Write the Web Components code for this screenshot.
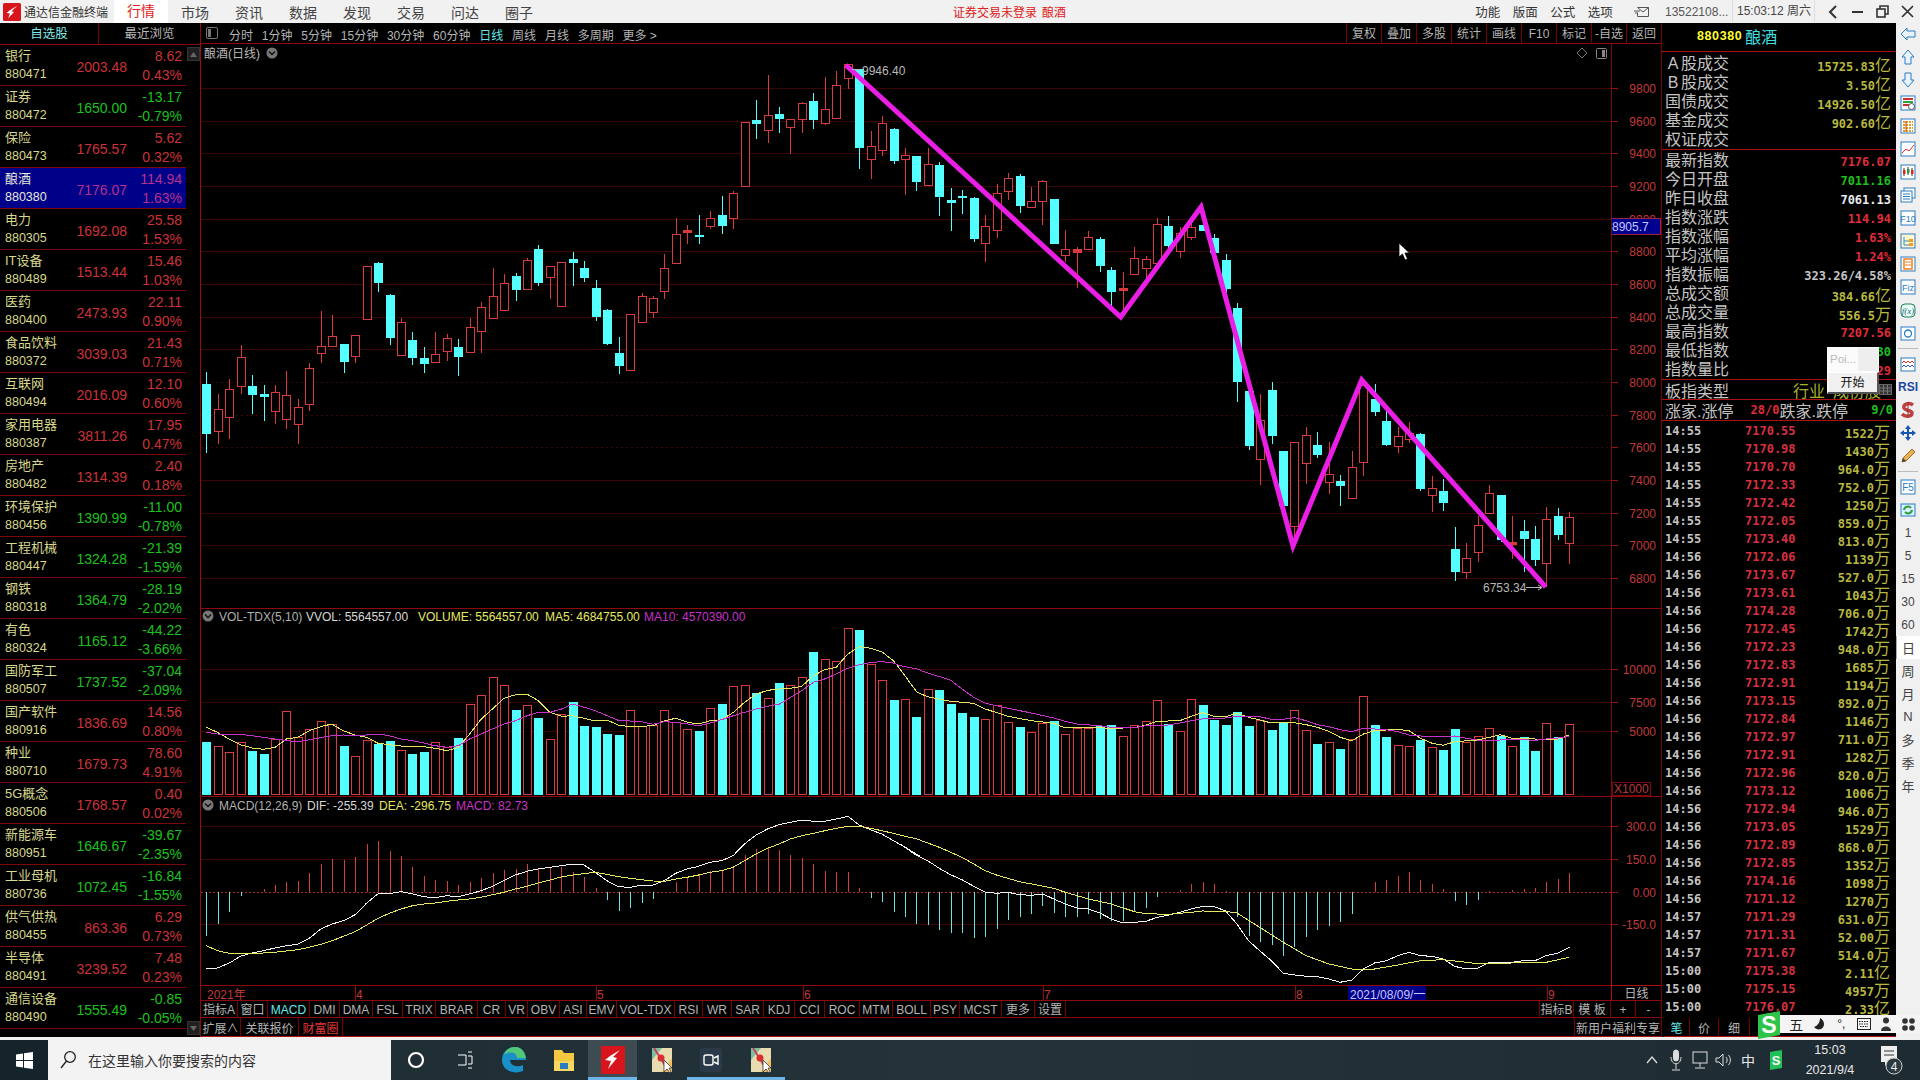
<!DOCTYPE html>
<html lang="zh">
<head>
<meta charset="utf-8">
<title>通达信金融终端</title>
<style>
  html, body { margin: 0; padding: 0; background: #000; }
  body {
    width: 1920px; height: 1080px; overflow: hidden; position: relative;
    font-family: "Liberation Sans", "Noto Sans CJK SC", sans-serif;
    font-size: 12px; color: #c8c8c8;
  }
  .desk { display: flex; height: 1014px; background: #000; }
  .centre { width: 1461px; display: flex; flex-direction: column; }
</style>
</head>
<body>
<tdx-titlebar></tdx-titlebar>
<div class="desk">
  <tdx-list id="list"></tdx-list>
  <div class="centre">
    <tdx-toolbar></tdx-toolbar>
    <tdx-kline></tdx-kline>
    <tdx-volume></tdx-volume>
    <tdx-macd></tdx-macd>
    <tdx-dates></tdx-dates>
    <tdx-indicators></tdx-indicators>
    <tdx-bottom></tdx-bottom>
  </div>
  <tdx-quote id="quote"></tdx-quote>
  <tdx-iconbar></tdx-iconbar>
</div>
<tdx-taskbar></tdx-taskbar>
<tdx-popup></tdx-popup>
<tdx-ime></tdx-ime>
<tdx-cursor></tdx-cursor>

<script>
const RED = '#d83a3e', CYAN = '#54ffff', LINE = '#8c0a0a', GRID = '#3a0606';
const X = i => Math.round(206.3 + 11.454 * i) + 0.5;

// up, wick top, body top, body bottom, wick bottom (screen y)
const CANDLES = [
  [0,373,385,435,454],[1,395,410,432,445],[1,380,390,418,440],[1,346,358,387,395],[0,376,387,396,415],
  [0,386,395,397,422],[1,386,393,412,425],[1,372,396,420,430],[1,400,408,425,445],[1,364,369,405,412],
  [1,312,347,354,364],[1,316,337,347,347],[0,345,345,363,374],[1,336,336,357,364],[1,267,267,320,320],
  [0,263,264,284,293],[0,295,296,339,346],[1,319,323,356,356],[0,333,341,359,366],[0,348,359,365,374],
  [1,333,355,363,363],[1,335,339,352,362],[0,340,348,358,377],[1,319,328,353,353],[1,303,308,332,354],
  [1,269,297,319,319],[1,275,284,311,311],[0,274,277,291,302],[1,259,261,290,290],[0,246,250,284,287],
  [1,267,267,278,300],[1,263,263,307,307],[0,253,260,263,287],[0,262,269,279,283],[0,281,289,318,322],
  [0,310,311,345,346],[0,338,354,367,375],[1,315,315,371,371],[1,294,297,323,323],[1,297,299,313,319],
  [1,255,269,292,300],[1,219,235,264,264],[1,226,231,233,245],[0,216,236,237,245],[1,212,219,227,230],
  [0,197,216,227,235],[1,192,194,219,230],[1,123,123,187,187],[0,101,121,125,140],[1,76,116,131,144],
  [0,108,115,120,134],[1,120,120,128,155],[1,103,104,120,134],[0,94,102,121,130],[1,78,110,124,126],
  [1,72,86,119,119],[1,65,65,79,90],[0,70,70,149,170],[1,132,147,160,180],[1,117,124,151,157],
  [0,129,130,162,165],[1,149,156,160,196],[0,157,157,183,192],[1,149,165,186,186],[0,163,166,198,217],
  [0,189,201,203,232],[0,191,197,198,215],[0,198,199,240,243],[1,216,227,244,263],[1,185,194,231,239],
  [1,174,179,192,201],[0,175,177,207,214],[1,188,202,208,208],[1,181,182,202,226],[0,200,200,245,245],
  [1,231,250,256,263],[1,248,250,253,289],[1,232,238,250,251],[0,238,240,267,273],[0,268,271,293,307],
  [1,273,289,291,317],[1,248,259,275,275],[1,257,260,269,287],[1,219,225,264,264],[0,217,227,247,250],
  [1,228,234,252,259],[1,224,228,238,241],[0,226,226,232,232],[0,235,239,254,258],[0,255,261,290,295],
  [0,304,309,383,403],[0,385,392,447,451],[1,395,421,460,486],[0,383,391,437,445],[0,452,452,507,507],
  [1,443,443,527,547],[1,428,436,464,485],[0,433,446,456,459],[1,443,475,483,495],[0,476,482,487,507],
  [1,452,468,499,499],[1,380,386,463,477],[0,385,400,413,417],[0,407,422,446,447],[1,428,437,447,454],
  [1,423,434,440,444],[0,434,435,490,492],[1,477,489,496,513],[0,480,492,504,512],[0,528,550,573,582],
  [1,544,559,573,580],[1,517,526,553,563],[1,486,494,514,514],[0,496,496,541,543],[1,517,543,545,560],
  [0,521,532,540,573],[0,527,540,561,567],[1,508,520,564,588],[0,509,517,536,541],[1,513,518,544,565]
];

// top of each volume bar
const VOLUME = [
  743,747,753,743,752,755,740,712,738,730,722,725,747,757,741,745,742,751,755,753,
  743,748,739,705,696,678,686,711,706,719,740,715,703,727,728,735,736,711,727,726,
  711,723,730,732,709,705,687,686,694,699,684,686,678,653,660,662,629,631,665,681,
  701,700,718,690,691,705,714,718,720,706,723,728,733,724,722,735,729,729,727,726,
  737,726,722,701,725,732,700,706,721,726,713,727,721,731,723,711,731,745,743,750,
  740,697,726,738,746,747,741,748,751,730,743,737,729,737,747,738,752,724,738,725
];

// end of each MACD bar, the zero line is 893
const HIST = [
  937,925,913,897,893,890,886,883,882,874,865,860,861,858,845,842,852,857,868,877,
  881,882,886,883,879,874,871,870,865,870,869,868,873,878,889,901,912,909,904,900,
  893,883,878,876,872,872,868,856,850,849,851,856,859,865,872,873,873,889,899,903,
  913,918,925,926,931,934,934,939,938,930,921,918,915,907,914,918,918,915,920,922,
  922,913,909,898,893,891,885,883,885,892,918,937,943,946,957,948,938,931,927,923,
  915,893,883,881,877,873,881,885,890,902,906,901,892,893,891,890,889,883,880,874
];

const left = (pts) => pts.map(([x, y]) => [200 + x / 2.24, 600 + y / 3]);
const right = (pts) => pts.map(([x, y]) => [900 + x / 2.063, 610 + y / 3]);
const macd = (pts) => pts.map(([x, y]) => [200 + x / 2.178, 800 + y / 3]);
const poly = (pts, color) => `<polyline fill="none" stroke="${color}" stroke-width="1" shape-rendering="crispEdges" points="${pts.map(p => p[0].toFixed(1) + ',' + p[1].toFixed(1)).join(' ')}"/>`;

const MA5 = left([[14,385],[39,400],[65,420],[90,437],[117,447],[142,451],[168,445],[194,420],[219,415],[245,395],[270,383],[295,375],[321,395],[347,408],[373,415],[399,433],[424,437],[450,441],[476,442],[501,443],[527,448],[553,455],[579,445],[604,405],[630,360],[655,330],[681,298],[707,287],[733,286],[758,305],[784,340],[810,352],[834,350],[861,358],[885,366],[912,363],[937,378],[963,383],[989,382],[1015,380],[1040,365],[1066,358],[1092,370],[1117,375],[1143,365],[1168,362],[1195,340],[1220,310],[1246,285],[1272,274],[1298,270],[1323,268],[1348,262],[1374,230],[1399,212],[1425,205],[1451,165],[1477,143],[1503,148],[1529,160],[1553,185],[1568,210]])
  .concat(right([[35,250],[57,263],[104,277],[152,283],[176,300],[223,322],[271,335],[317,343],[341,357],[389,355],[436,358],[484,356],[507,348],[531,337],[577,335],[601,322],[624,311],[648,322],[671,323],[695,313],[719,325],[742,333],[766,342],[814,341],[838,347],[861,355],[885,367],[908,385],[932,395],[956,375],[979,365],[1027,361],[1050,365],[1074,388],[1098,403],[1121,409],[1144,398],[1191,393],[1216,385],[1238,377],[1263,388],[1285,388],[1333,392],[1358,390],[1381,378]]));
const MA10 = left([[14,400],[39,405],[65,406],[90,406],[117,410],[142,415],[168,420],[194,425],[219,428],[245,422],[270,416],[295,410],[321,408],[347,410],[373,408],[399,405],[424,410],[450,420],[476,425],[501,432],[527,440],[553,445],[579,440],[604,420],[630,405],[655,390],[681,375],[707,365],[733,350],[758,340],[784,340],[810,330],[834,315],[861,325],[885,335],[912,350],[937,364],[963,366],[989,368],[1015,376],[1040,368],[1066,370],[1092,375],[1117,380],[1143,372],[1168,362],[1195,350],[1220,340],[1246,330],[1272,322],[1298,315],[1323,295],[1348,275],[1374,250],[1399,240],[1425,225],[1451,208],[1477,197],[1503,190],[1529,188],[1553,192],[1568,200]])
  .concat(right([[35,180],[57,192],[104,213],[128,240],[152,265],[176,283],[199,290],[223,298],[271,312],[317,327],[341,337],[365,345],[412,350],[436,355],[484,356],[507,350],[554,348],[577,342],[601,335],[624,330],[671,327],[695,322],[742,323],[766,331],[791,331],[814,326],[838,335],[861,347],[885,353],[908,362],[932,368],[956,358],[1003,362],[1027,368],[1050,378],[1098,384],[1144,381],[1168,388],[1191,393],[1238,393],[1285,392],[1310,394],[1333,390],[1358,387],[1381,382]]));
const DIF = macd([[14,510],[38,507],[64,492],[88,472],[113,462],[138,455],[163,447],[188,440],[212,436],[238,418],[263,390],[288,375],[312,365],[338,347],[363,312],[388,284],[412,284],[438,278],[463,285],[487,293],[512,296],[537,290],[562,293],[587,285],[612,275],[637,262],[662,245],[687,228],[712,217],[737,210],[762,205],[787,200],[812,195],[836,198],[861,220],[886,245],[911,263],[937,265],[961,259],[987,258],[1011,245],[1036,223],[1061,210],[1086,202],[1111,190],[1136,185],[1161,170],[1186,135],[1211,108],[1236,90],[1261,77],[1286,70],[1311,63],[1336,67],[1361,67],[1386,60],[1411,52],[1436,78],[1460,92],[1485,105],[1510,125],[1536,145],[1568,172]])
  .concat(right([[0,705],[35,740],[57,755],[81,778],[104,797],[128,812],[152,832],[176,849],[199,853],[223,850],[247,857],[271,859],[295,855],[317,870],[341,885],[365,897],[389,900],[412,912],[436,930],[459,942],[484,940],[507,937],[531,925],[554,918],[577,910],[601,900],[624,892],[648,893],[671,905],[695,945],[719,995],[742,1025],[766,1055],[791,1093],[814,1098],[838,1102],[861,1103],[885,1110],[908,1120],[932,1113],[956,1080],[979,1062],[1003,1055],[1027,1040],[1050,1030],[1074,1040],[1098,1042],[1121,1050],[1144,1072],[1168,1080],[1191,1078],[1216,1060],[1263,1060],[1285,1055],[1310,1055],[1333,1040],[1358,1032],[1381,1015]]));
const DEA = macd([[14,440],[38,455],[64,463],[88,465],[113,464],[138,462],[163,460],[188,456],[212,452],[238,445],[263,436],[288,425],[312,412],[338,398],[363,378],[388,358],[412,343],[438,330],[463,320],[487,315],[512,312],[537,307],[562,303],[587,300],[612,295],[637,287],[662,280],[687,270],[712,262],[737,252],[762,243],[787,234],[812,228],[836,224],[861,220],[886,226],[911,233],[937,238],[961,242],[987,246],[1011,247],[1036,240],[1061,235],[1086,228],[1111,220],[1136,215],[1161,205],[1186,185],[1211,165],[1236,148],[1261,135],[1286,120],[1311,110],[1336,103],[1361,95],[1386,88],[1411,82],[1436,82],[1460,88],[1485,95],[1510,103],[1536,112],[1568,122]])
  .concat(right([[35,690],[81,715],[128,745],[176,785],[199,798],[247,818],[317,838],[341,850],[389,870],[436,885],[484,908],[507,914],[554,916],[601,910],[624,906],[671,907],[695,912],[742,955],[791,1000],[838,1040],[885,1065],[932,1080],[979,1080],[1027,1068],[1074,1055],[1121,1052],[1168,1060],[1191,1064],[1263,1062],[1333,1060],[1381,1045]]));

const ROWS = [
  ['银行','880471','2003.48','8.62','0.43%'],['证券','880472','1650.00','-13.17','-0.79%'],['保险','880473','1765.57','5.62','0.32%'],
  ['酿酒','880380','7176.07','114.94','1.63%'],['电力','880305','1692.08','25.58','1.53%'],['IT设备','880489','1513.44','15.46','1.03%'],
  ['医药','880400','2473.93','22.11','0.90%'],['食品饮料','880372','3039.03','21.43','0.71%'],['互联网','880494','2016.09','12.10','0.60%'],
  ['家用电器','880387','3811.26','17.95','0.47%'],['房地产','880482','1314.39','2.40','0.18%'],['环境保护','880456','1390.99','-11.00','-0.78%'],
  ['工程机械','880447','1324.28','-21.39','-1.59%'],['钢铁','880318','1364.79','-28.19','-2.02%'],['有色','880324','1165.12','-44.22','-3.66%'],
  ['国防军工','880507','1737.52','-37.04','-2.09%'],['国产软件','880916','1836.69','14.56','0.80%'],['种业','880710','1679.73','78.60','4.91%'],
  ['5G概念','880506','1768.57','0.40','0.02%'],['新能源车','880951','1646.67','-39.67','-2.35%'],['工业母机','880736','1072.45','-16.84','-1.55%'],
  ['供气供热','880455','863.36','6.29','0.73%'],['半导体','880491','3239.52','7.48','0.23%'],['通信设备','880490','1555.49','-0.85','-0.05%']
];

const TICKS = [
  ['14:55','7170.55','1522','万'],['14:55','7170.98','1430','万'],['14:55','7170.70','964.0','万'],['14:55','7172.33','752.0','万'],
  ['14:55','7172.42','1250','万'],['14:55','7172.05','859.0','万'],['14:55','7173.40','813.0','万'],['14:56','7172.06','1139','万'],
  ['14:56','7173.67','527.0','万'],['14:56','7173.61','1043','万'],['14:56','7174.28','706.0','万'],['14:56','7172.45','1742','万'],
  ['14:56','7172.23','948.0','万'],['14:56','7172.83','1685','万'],['14:56','7172.91','1194','万'],['14:56','7173.15','892.0','万'],
  ['14:56','7172.84','1146','万'],['14:56','7172.97','711.0','万'],['14:56','7172.91','1282','万'],['14:56','7172.96','820.0','万'],
  ['14:56','7173.12','1006','万'],['14:56','7172.94','946.0','万'],['14:56','7173.05','1529','万'],['14:56','7172.89','868.0','万'],
  ['14:56','7172.85','1352','万'],['14:56','7174.16','1098','万'],['14:56','7171.12','1270','万'],['14:57','7171.29','631.0','万'],
  ['14:57','7171.31','52.00','万'],['14:57','7171.67','514.0','万'],['15:00','7175.38','2.11','亿'],['15:00','7175.15','4957','万'],
  ['15:00','7176.07','2.33','亿']
];

const LOGO = `<svg width="18" height="18" viewBox="0 0 18 18"><rect width="18" height="18" rx="1.5" fill="#d8141c"/><path d="M14.5 2.5 L6.5 7.5 L3.5 10 L7 10.5 L5 15.5 L11 9 L8.5 8.2 Z" fill="#fff"/></svg>`;

class BaseEl extends HTMLElement {
  constructor() {
    super();
    this.attachShadow({ mode: 'open' });
  }
  connectedCallback() {
    this.render();
  }
}

class TdxTitlebar extends BaseEl {
  render() {
    const menu = ['市场','资讯','数据','发现','交易','问达','圈子'].map(m => `<span class="m">${m}</span>`).join('');
    this.shadowRoot.innerHTML = `<style>
      :host { display: flex; height: 23px; background: #f1f1f1; color: #444; align-items: center; font-size: 14px; }
      .logo { width: 24px; padding-left: 3px; box-sizing: border-box; display: flex; }
      .t { font-size: 12px; width: 89px; color: #333; white-space: nowrap; }
      .on { width: 54px; height: 23px; line-height: 23px; text-align: center; color: #e02020; background: #fff; margin-left: 1px; box-sizing: border-box; }
      .m { width: 54px; text-align: center; }
      .warn { position: absolute; left: 953px; top: 3px; font-size: 12px; color: #e02020; }
      .warn b { font-weight: normal; margin-left: 5px; }
      .sp { flex: 1; }
      .f { font-size: 12.5px; width: 37.5px; text-align: center; color: #333; }
      .acct { font-size: 12px; width: 67px; color: #555; margin-left: 10px; white-space: nowrap; }
      .time { font-size: 12px; width: 83px; padding-left: 4px; color: #444; border-left: 1px solid #ddd; border-right: 1px solid #ddd; box-sizing: border-box; line-height: 23px; height: 23px; white-space: nowrap; }
      svg { display: block; }
      .ico { width: 25px; display: flex; justify-content: center; }
    </style>
    <div class="logo">${LOGO}</div>
    <span class="t">通达信金融终端</span>
    <span class="on">行情</span>${menu}
    <span class="warn">证券交易未登录<b>酿酒</b></span>
    <span class="sp"></span>
    <span class="f">功能</span><span class="f">版面</span><span class="f">公式</span><span class="f">选项</span>
    <span class="ico" style="margin-left:10px;width:26px"><svg width="16" height="12" viewBox="0 0 16 12" fill="none" stroke="#555"><path d="M3.5 1.5 H14.5 V10.5 H3.5 V7 M3.5 1.5 L9 6 L14.5 1.5"/><path d="M0 5 H6 M1 7 H4" /></svg></span>
    <span class="acct">13522108...</span>
    <span class="time">15:03:12 周六</span>
    <span class="ico" style="margin-left:5px"><svg width="10" height="14" viewBox="0 0 10 14" fill="none" stroke="#333" stroke-width="2"><path d="M8 1 L2 7 L8 13"/></svg></span>
    <span class="ico"><svg width="11" height="3"><rect width="11" height="2" y="1" fill="#333"/></svg></span>
    <span class="ico"><svg width="13" height="13" viewBox="0 0 13 13" fill="none" stroke="#333" stroke-width="1.6"><rect x="1" y="4" width="8" height="8"/><path d="M4 4 V1 H12 V9 H9"/></svg></span>
    <span class="ico"><svg width="13" height="13" viewBox="0 0 13 13" stroke="#333" stroke-width="1.7"><path d="M1 1 L12 12 M12 1 L1 12"/></svg></span>`;
  }
}

class TdxListRow extends BaseEl {
  render() {
    const a = n => this.getAttribute(n);
    const down = a('change').startsWith('-');
    this.shadowRoot.innerHTML = `<style>
      :host { display: flex; height: 41px; box-sizing: border-box; border-bottom: 1px solid #7a0a0a; align-items: center; }
      :host([selected]) { background: #000088; }
      .n { width: 70px; padding-left: 5px; box-sizing: border-box; color: #d8d88c; line-height: 17px; }
      :host([selected]) .n { color: #e8e8d8; }
      .n div:first-child { font-size: 13px; height: 19px; white-space: nowrap; }
      .n div:last-child { font-size: 12.5px; }
      .p { width: 57px; text-align: right; font-size: 14px; padding-top: 4px; }
      .c { width: 55px; text-align: right; font-size: 14px; line-height: 19px; padding-top: 2px; }
      .v { color: ${down ? '#1cc01c' : '#cc3238'}; }
      :host([selected]) .v { color: #b8308c; }
    </style>
    <div class="n"><div>${a('name')}</div><div>${a('code')}</div></div>
    <div class="p v">${a('price')}</div>
    <div class="c v"><div>${a('change')}</div><div>${a('pct')}</div></div>`;
  }
}

class TdxList extends BaseEl {
  render() {
    this.shadowRoot.innerHTML = `<style>
      :host { display: flex; flex-direction: column; width: 200px; flex: none; position: relative; }
      .tabs { display: flex; height: 21px; border-bottom: 1px solid ${LINE}; line-height: 22px; text-align: center; font-size: 12.5px; }
      .tabs div:first-child { width: 99px; color: #7fe8e8; border-right: 1px solid #700; box-sizing: border-box; }
      .tabs div:last-child { width: 101px; color: #b8b8b8; }
      .rows { width: 186px; }
      .btn { position: absolute; left: 187px; width: 13px; height: 14px; background: #202020; border: 1px solid #333; box-sizing: border-box; display: flex; align-items: center; justify-content: center; }
      .up { top: 24px; }
      .dn { bottom: 2px; }
    </style>
    <div class="tabs"><div>自选股</div><div>最近浏览</div></div>
    <div class="rows"><slot></slot></div>
    <div class="btn up"><svg width="7" height="5"><path d="M0 5 L3.5 0 L7 5Z" fill="#666"/></svg></div>
    <div class="btn dn"><svg width="7" height="5"><path d="M0 0 L3.5 5 L7 0Z" fill="#666"/></svg></div>`;
  }
}

class TdxToolbar extends BaseEl {
  render() {
    const periods = ['分时','1分钟','5分钟','15分钟','30分钟','60分钟','日线','周线','月线','多周期','更多 &gt;']
      .map(p => `<span class="${p === '日线' ? 'on' : ''}">${p}</span>`).join('');
    const tools = ['复权','叠加','多股','统计','画线','F10','标记','-自选','返回'].map(t => `<b>${t}</b>`).join('');
    this.shadowRoot.innerHTML = `<style>
      :host { display: flex; height: 21px; flex: none; box-sizing: border-box; border-bottom: 1px solid ${LINE}; border-left: 1px solid ${LINE}; align-items: center; color: #b4b4b4; font-size: 12px; white-space: nowrap; }
      .i { width: 28px; padding-left: 5px; box-sizing: border-box; display: flex; border-right: 1px solid transparent; }
      .p { display: flex; gap: 8.8px; padding-top: 2px; }
      .on { color: #66e8e8; }
      .t { margin-left: auto; display: flex; height: 20px; }
      b { font-weight: normal; width: 35px; text-align: center; line-height: 22px; border-left: 1px solid #700; box-sizing: border-box; }
    </style>
    <span class="i"><svg width="12" height="12" viewBox="0 0 12 12"><rect x=".5" y=".5" width="11" height="11" rx="1.5" fill="none" stroke="#777"/><rect x="2" y="2" width="3" height="8" fill="#777"/></svg></span>
    <div class="p">${periods}</div>
    <div class="t">${tools}</div>`;
  }
}

class TdxPane extends BaseEl {
  // shared frame: svg in screen coordinates
  frame(top, height, body) {
    this.shadowRoot.innerHTML = `<style>
      :host { display: block; height: ${height}px; flex: none; }
      svg { display: block; }
      text { font-family: "Liberation Sans", "Noto Sans CJK SC", sans-serif; font-size: 12px; }
    </style>
    <svg width="1461" height="${height}" viewBox="200 ${top} 1461 ${height}">
      <rect x="200" y="${top}" width="1461" height="${height}" fill="#000"/>
      ${body}
      <path d="M200.5 ${top} V${top + height}" stroke="#9a0c0c"/>
      <path d="M1611.5 ${top} V${top + height}" stroke="${this.axisColor || '#7a0a0a'}"/>
      <path d="M200 ${top + height - .5} H1661" stroke="${LINE}"/>
    </svg>`;
  }
  level(y, label, dash) {
    return `<path d="M201 ${y}.5 H1611" stroke="${GRID}" ${dash ? 'stroke-dasharray="2 3"' : ''}/>
      <path d="M1611 ${y}.5 H1618" stroke="#a01010"/>
      <text x="1656" y="${y + 5}" text-anchor="end" fill="#c03a3a">${label}</text>`;
  }
  dot(x, y) {
    return `<circle cx="${x}" cy="${y}" r="5.5" fill="#777"/><path d="M${x - 3} ${y - 1.5} L${x} ${y + 1.5} L${x + 3} ${y - 1.5}" stroke="#111" stroke-width="1.4" fill="none"/>`;
  }
}

class TdxKline extends TdxPane {
  render() {
    let body = '';
    for (let p = 9800; p >= 6800; p -= 200) {
      body += this.level(Math.round(383 + (8000 - p) * 0.1633), p, [8000, 7800, 7600].includes(p));
    }
    CANDLES.forEach((c, i) => {
      const x = X(i), col = c[0] ? RED : CYAN;
      body += `<path d="M${x} ${c[1]} V${c[2]} M${x} ${c[3]} V${c[4]}" stroke="${col}"/>`;
      if (c[3] - c[2] <= 3) body += `<rect x="${x - 4.5}" y="${c[2]}" width="9" height="${c[3] - c[2] + 1}" fill="${col}"/>`;
      else if (c[0]) body += `<rect x="${x - 4}" y="${c[2] + .5}" width="8" height="${c[3] - c[2]}" fill="#000" stroke="${col}"/>`;
      else body += `<rect x="${x - 4.5}" y="${c[2]}" width="9" height="${c[3] - c[2]}" fill="${col}"/>`;
    });
    body += `<polyline fill="none" stroke="#ea1ee4" stroke-width="5" stroke-linejoin="miter"
      points="845.7,66 1120.7,318 1201,208 1293,547 1361.7,381 1545.7,588"/>
      <text x="862" y="76" fill="#b8b8b8">9946.40</text>
      <path d="M852 70.5 H860" stroke="#b8b8b8"/>
      <text x="1483" y="593" fill="#b8b8b8">6753.34</text>
      <path d="M1526 588.5 H1542 M1538 586 L1542 588.5 L1538 591" stroke="#b8b8b8" fill="none"/>
      <text x="204" y="59" fill="#b8b8b8">酿酒(日线)</text>${this.dot(272, 54)}
      <path d="M1582 49 L1587 54 L1582 59 L1577 54 Z" fill="none" stroke="#777"/>
      <rect x="1596.5" y="49.5" width="10" height="10" rx="1" fill="none" stroke="#888"/><rect x="1602" y="51" width="3" height="7" fill="#888"/>
      <rect x="1611.5" y="219.5" width="49" height="16" fill="#000090" stroke="#a02040"/>
      <text x="1612" y="232" fill="#c8c8ff">8905.7</text>`;
    this.frame(45, 565, body);
  }
}

class TdxVolume extends TdxPane {
  render() {
    let body = this.level(670, 10000) + this.level(703, 7500) + this.level(732, 5000);
    VOLUME.forEach((top, i) => {
      const x = X(i);
      if (CANDLES[i][0]) body += `<rect x="${x - 4}" y="${top + .5}" width="8" height="${795 - top}" fill="#000" stroke="${RED}"/>`;
      else body += `<rect x="${x - 4.5}" y="${top}" width="9" height="${796 - top}" fill="${CYAN}"/>`;
    });
    body += poly(MA5, '#e8e860') + poly(MA10, '#c832c8');
    body += `${this.dot(208, 617)}
      <text x="219" y="622" fill="#b0b0b0">VOL-TDX(5,10)</text>
      <text x="306" y="622" fill="#d8d8d8">VVOL: 5564557.00</text>
      <text x="418" y="622" fill="#e8e860">VOLUME: 5564557.00</text>
      <text x="545" y="622" fill="#e8e860">MA5: 4684755.00</text>
      <text x="644" y="622" fill="#c832c8">MA10: 4570390.00</text>
      <rect x="1612.5" y="783.5" width="38" height="13" fill="none" stroke="#7a0a0a"/>
      <text x="1614" y="794" fill="#b83838">X1000</text>`;
    this.frame(610, 188, body);
  }
}

class TdxMacd extends TdxPane {
  render() {
    this.axisColor = '#b01010';
    let body = this.level(827, '300.0') + this.level(860, '150.0') + this.level(925, '-150.0');
    body += `<path d="M201 893.5 H1611" stroke="#a82a2a" stroke-dasharray="2 2"/><path d="M1611 893.5 H1618" stroke="#a01010"/><text x="1656" y="898" text-anchor="end" fill="#c03a3a">0.00</text>`;
    HIST.forEach((y, i) => {
      if (y === 893) return;
      const x = X(i);
      body += `<path d="M${x} 893 V${y}" stroke="${y < 893 ? '#d04040' : '#70e0e0'}"/>`;
    });
    body += poly(DIF, '#f4f4f4') + poly(DEA, '#e8e860');
    body += `${this.dot(208, 806)}
      <text x="219" y="811" fill="#b0b0b0">MACD(12,26,9)</text>
      <text x="307" y="811" fill="#d8d8d8">DIF: -255.39</text>
      <text x="379" y="811" fill="#e8e860">DEA: -296.75</text>
      <text x="456" y="811" fill="#c832c8">MACD: 82.73</text>`;
    this.frame(798, 189, body);
  }
}

class TdxDates extends BaseEl {
  render() {
    const marks = [[207,'2021年'],[356,'4'],[597,'5'],[804,'6'],[1044,'7'],[1296,'8'],[1548,'9']];
    const ticks = [355,596,803,1043,1295,1547].map(x => `<path d="M${x}.5 987 V1001" stroke="#8c0a0a"/>`).join('');
    const labels = marks.map(m => `<text x="${m[0]}" y="1000" fill="#c03a3a">${m[1]}</text>`).join('');
    this.shadowRoot.innerHTML = `<style>
      :host { display: flex; height: 15px; flex: none; box-sizing: border-box; border-bottom: 1px solid ${LINE}; border-left: 1px solid ${LINE}; }
      svg { display: block; flex: none; position: relative; z-index: 1; margin-bottom: -4px; }
      text { font-size: 12px; font-family: "Liberation Sans", "Noto Sans CJK SC", sans-serif; }
      .d { flex: 1; text-align: center; line-height: 16px; color: #b8b8b8; border-left: 1px solid #b01010; border-top: 1px solid #b01010; margin-top: -1px; font-size: 12px; background: #000; }
    </style>
    <svg width="1410" height="18" viewBox="201 987 1410 18">
      ${ticks}${labels}
      <rect x="1348" y="987" width="78" height="14" fill="#000088"/>
      <text x="1350" y="1000" fill="#c8c8ff">2021/08/09/一</text>
    </svg>
    <div class="d">日线</div>`;
  }
}

class TdxIndicators extends BaseEl {
  render() {
    const cells = [['指标A',37],['窗口',30],['MACD',42,'on'],['DMI',30],['DMA',33],['FSL',30],['TRIX',33],['BRAR',42],['CR',28],['VR',22],['OBV',32],['ASI',27],['EMV',30],['VOL-TDX',58],['RSI',28],['WR',29],['SAR',32],['KDJ',31],['CCI',30],['ROC',35],['MTM',33],['BOLL',38],['PSY',29],['MCST',42],['更多',33],['设置',31]];
    const html = cells.map(c => `<span class="${c[2] || ''}" style="width:${c[1]}px">${c[0]}</span>`).join('');
    this.shadowRoot.innerHTML = `<style>
      :host { display: flex; height: 17px; flex: none; box-sizing: border-box; border-bottom: 1px solid ${LINE}; border-left: 1px solid ${LINE}; color: #b4b4b4; font-size: 12px; line-height: 19px; white-space: nowrap; }
      span { display: block; flex: none; text-align: center; box-sizing: border-box; border-right: 1px solid #700; height: 16px; }
      .on { color: #66e8e8; }
      .sp { flex: 1; }
      .b { border-left: 1px solid #700; }
    </style>${html}<span class="sp" style="border:0"></span>
    <span class="b" style="width:35px">指标B</span><span style="width:37px">模 板</span><span style="width:25px">+</span><span style="width:25px;border:0">-</span>`;
  }
}

class TdxBottom extends BaseEl {
  render() {
    this.shadowRoot.innerHTML = `<style>
      :host { display: flex; height: 19px; flex: none; box-sizing: border-box; border-bottom: 1px solid #b01010; border-left: 1px solid ${LINE}; color: #b4b4b4; font-size: 12px; line-height: 22px; white-space: nowrap; }
      span { display: block; text-align: center; box-sizing: border-box; border-right: 1px solid #700; height: 18px; }
      .s { flex: 1; border: 0; }
      .red { color: #e03838; }
    </style>
    <span style="width:40px">扩展∧</span><span style="width:58px">关联报价</span><span class="red" style="width:44px">财富圈</span><span class="s"></span>
    <span style="width:87px;border-left:1px solid #700;border-right:0">新用户福利专享</span>`;
  }
}

class TdxStat extends BaseEl {
  render() {
    const a = n => this.getAttribute(n) || '';
    let label = a('label');
    if (/^[A-Z]/.test(label)) label = `<i>${label[0]}</i>${label.slice(1)}`;
    this.shadowRoot.innerHTML = `<style>
      :host { display: flex; height: var(--row, 19px); align-items: center; padding: 0 5px 0 3px; }
      .l { font-size: 16px; color: #c4c4c4; white-space: nowrap; line-height: 18px; }
      i { font-style: normal; display: inline-block; width: 16px; text-align: center; }
      .v { margin-left: auto; font: bold 12px "DejaVu Sans Mono", monospace; color: ${a('color') || '#b8b840'}; }
      .u { font-size: 16px; color: #b8b840; font-family: "Liberation Sans", "Noto Sans CJK SC", sans-serif; font-weight: normal; }
    </style>
    <span class="l">${label}</span><span class="v">${a('value')}<span class="u">${a('unit')}</span></span>`;
  }
}

class TdxTick extends BaseEl {
  render() {
    const a = n => this.getAttribute(n);
    this.shadowRoot.innerHTML = `<style>
      :host { display: flex; height: 18px; align-items: center; padding: 0 6px 0 3px; font: bold 12px "DejaVu Sans Mono", monospace; white-space: nowrap; }
      .t { width: 80px; color: #c4c4c4; }
      .p { width: 52px; color: #d83040; }
      .v { flex: 1; text-align: right; color: #b8b840; }
      .u { font: 16px "Liberation Sans", "Noto Sans CJK SC", sans-serif; }
    </style>
    <span class="t">${a('time')}</span><span class="p">${a('price')}</span><span class="v">${a('vol')}<span class="u">${a('unit')}</span></span>`;
  }
}

class TdxQuote extends BaseEl {
  render() {
    this.shadowRoot.innerHTML = `<style>
      :host { display: flex; flex-direction: column; width: 235px; flex: none; height: 1014px; box-sizing: border-box; border-left: 1px solid #700; }
      .h { height: 29px; flex: none; border-bottom: 1px solid #b01010; box-sizing: border-box; display: flex; align-items: center; padding: 0 0 2px 35px; gap: 3px; }
      .h b { font: bold 12.5px "Liberation Sans", sans-serif; color: #ffff30; letter-spacing: .6px; }
      .h em { font-style: normal; font-size: 16px; color: #40e0e0; }
      .g { border-bottom: 1px solid #b01010; flex: none; padding-top: 1px; box-sizing: content-box; }
      .a { height: 95px; padding-top: 2px; }
      .b { height: 227px; padding-top: 2px; --row: 18.95px; }
      .c { height: 19px; display: flex; align-items: center; padding: 0 6px 0 3px; font-size: 16px; color: #c4c4c4; position: relative; }
      .c .y { margin-left: 29px; color: #a8b030; letter-spacing: 0; }
      .c svg { position: absolute; right: 4px; top: 4px; }
      .d { height: 20px; padding-top: 0; margin-bottom: 1px; display: flex; align-items: center; padding-left: 3px; padding-right: 3px; font-size: 16px; color: #c4c4c4; white-space: nowrap; }
      .d b { font: bold 12px "DejaVu Sans Mono", monospace; }
      .t { flex: 1; }
      .tabs { height: 19px; flex: none; border-top: 0; display: flex; box-sizing: border-box; border-bottom: 1px solid #b01010; color: #b4b4b4; line-height: 22px; margin-left: 2px; }
      .tabs span { text-align: center; border-right: 1px solid #700; box-sizing: border-box; }
      .tabs .on { color: #66e8e8; }
    </style>
    <div class="h"><b>880380</b><em>酿酒</em></div>
    <div class="g a"><slot name="a"></slot></div>
    <div class="g b"><slot name="b"></slot></div>
    <div class="g c">板指类型<span class="y" style="margin-left:64px">行业</span><span class="y" style="margin-left:8px">成份股</span>
      <svg width="13" height="11" viewBox="0 0 13 11"><rect x=".5" y=".5" width="12" height="10" fill="#333" stroke="#666"/><path d="M1 4 H12 M1 7 H12 M4.5 1 V10 M8.5 1 V10" stroke="#777"/></svg></div>
    <div class="g d">涨家.涨停<b style="color:#e02c3a;margin-left:17px;width:29px">28/0</b>跌家.跌停<b style="color:#1cc01c;margin-left:auto">9/0</b></div>
    <div class="t"><slot name="t"></slot></div>
    <div class="tabs"><span class="on" style="width:26px">笔</span><span style="width:29px">价</span><span style="width:31px">细</span><span style="border:0;width:30px">买</span></div>`;
  }
}

const B = '#2a7cc0';
const ICONS = {
  left: `<path d="M8 3 L2 9 L8 15 V12 H16 V6 H8 Z" fill="#e8f2fb" stroke="${B}"/>`,
  up: `<path d="M3 9 L9 2 L15 9 H12 V16 H6 V9 Z" fill="#e8f2fb" stroke="${B}"/>`,
  down: `<path d="M3 9 L9 16 L15 9 H12 V2 H6 V9 Z" fill="#e8f2fb" stroke="${B}"/>`,
  list: `<rect x="2" y="2" width="14" height="14" fill="#fff" stroke="${B}"/><path d="M4 5 H14" stroke="#d03030" stroke-width="2"/><path d="M4 8 H14" stroke="#30a040" stroke-width="2"/><path d="M4 11 H10" stroke="#d03030" stroke-width="2"/><circle cx="12.5" cy="12.5" r="3" fill="#fff" stroke="#555"/>`,
  grid: `<rect x="2" y="2" width="14" height="14" fill="#fff" stroke="${B}"/><path d="M4 5 H14 M4 8 H14 M4 11 H14 M4 14 H14" stroke="#e0a020" stroke-dasharray="2 1" stroke-width="2"/><path d="M7 4 V15" stroke="#d03030"/>`,
  line: `<rect x="2" y="2" width="14" height="14" fill="#fff" stroke="${B}"/><path d="M3 13 L7 9 L10 11 L15 5" fill="none" stroke="#e03030"/>`,
  kline: `<rect x="2" y="2" width="14" height="14" fill="#fff" stroke="${B}"/><path d="M5 5 V13 M9 4 V12 M13 5 V13" stroke="#333"/><rect x="4" y="7" width="2.5" height="4" fill="#e02020"/><rect x="8" y="6" width="2.5" height="4" fill="#20a030"/><rect x="12" y="7" width="2.5" height="4" fill="#e02020"/>`,
  docs: `<rect x="5" y="2" width="11" height="10" fill="#fff" stroke="${B}"/><rect x="2" y="5" width="11" height="11" fill="#fff" stroke="${B}"/><path d="M4 8 H11 M4 10.5 H11 M4 13 H11" stroke="${B}"/>`,
  fio: `<rect x="2" y="2" width="14" height="14" fill="#fff" stroke="${B}"/><text x="9" y="13" font-size="9" text-anchor="middle" fill="${B}" font-family="Liberation Sans">F10</text>`,
  tree: `<rect x="2" y="2" width="14" height="14" fill="#fff5d0" stroke="${B}"/><path d="M5 5 V13 H12 M5 9 H12" fill="none" stroke="#3090c0"/><rect x="10" y="7" width="4" height="3" fill="#f0a020"/><rect x="10" y="11" width="4" height="3" fill="#f0a020"/>`,
  doc: `<rect x="2" y="2" width="14" height="14" fill="#fff" stroke="${B}"/><rect x="5" y="4" width="8" height="10" fill="#fff" stroke="#f08020" stroke-width="1.5"/><path d="M6 7 H12 M6 10 H12" stroke="#f08020"/>`,
  fiz: `<rect x="2" y="2" width="14" height="14" fill="#fff" stroke="${B}"/><text x="9" y="13" font-size="9" text-anchor="middle" fill="${B}" font-family="Liberation Sans">Fiz</text>`,
  fx: `<rect x="2" y="3" width="14" height="13" rx="4" fill="#e8fff4" stroke="#208060"/><text x="9" y="13" font-size="9" font-style="italic" text-anchor="middle" fill="#206080" font-family="Liberation Serif">f(x)</text>`,
  circle: `<rect x="2" y="3" width="14" height="13" fill="#fff" stroke="${B}"/><circle cx="9" cy="9.5" r="3.5" fill="none" stroke="${B}" stroke-width="1.3"/>`,
  wave: `<rect x="2" y="3" width="14" height="13" fill="#fff" stroke="${B}"/><path d="M3 8 L5 6 L7 8 L9 6 L11 8 L13 6 L15 8" fill="none" stroke="#e03030"/><path d="M3 12 L5 10 L7 12 L9 10 L11 12 L13 10 L15 12" fill="none" stroke="#3050d0"/>`,
  dollar: `<path d="M14 4 C10 1 4 3 5 7 C6 10 13 9 13 12 C13 16 6 16 3 13" fill="none" stroke="#c04040" stroke-width="3.5"/><path d="M9 1 V17" stroke="#903030"/>`,
  move: `<path d="M9 1 L12 5 H10 V8 H13 V6 L17 9 L13 12 V10 H10 V13 H12 L9 17 L6 13 H8 V10 H5 V12 L1 9 L5 6 V8 H8 V5 H6 Z" fill="#1c55b0"/>`,
  pencil: `<path d="M3 15 L4 11 L13 2 L16 5 L7 14 Z" fill="#e8b050" stroke="#a07020"/><path d="M3 15 L4 11 L7 14 Z" fill="#444"/>`,
  f5: `<rect x="2" y="2" width="14" height="14" fill="#fff" stroke="${B}"/><text x="9" y="13" font-size="10" text-anchor="middle" fill="${B}" font-family="Liberation Sans">F5</text>`,
  refresh: `<rect x="2" y="3" width="14" height="12" fill="#d8f0ff" stroke="${B}"/><path d="M5 9 A4 4 0 0 1 12 7 M13 9 A4 4 0 0 1 6 11" fill="none" stroke="#30a040" stroke-width="2"/>`
};

class TdxIconbar extends BaseEl {
  render() {
    const icon = k => `<div class="it"><svg width="18" height="18" viewBox="0 0 18 18">${ICONS[k]}</svg></div>`;
    const label = (t, c = '') => `<div class="it ${c}">${t}</div>`;
    const top = ['left','up','down','list','grid','line','kline','docs','fio','tree','doc','fiz','fx','circle'].map(icon).join('');
    const mid = icon('wave') + `<div class="it rsi">RSI</div>` + ['dollar','move','pencil'].map(icon).join('');
    const low = ['f5','refresh'].map(icon).join('');
    const nums = ['1','5','15','30','60'].map(t => label(t)).join('');
    const cal = label('日', 'sel') + ['周','月','N','多','季','年'].map(t => label(t, 'big')).join('');
    this.shadowRoot.innerHTML = `<style>
      :host { display: block; width: 24px; flex: none; height: 1014px; background: #f0f0f0; color: #333; text-align: center; overflow: hidden; }
      .it { height: 23px; display: flex; align-items: center; justify-content: center; font-size: 12px; color: #444; }
      .rsi { font: bold 12px "Liberation Sans", sans-serif; color: #2048a0; }
      .big { font-size: 13px; }
      .sel { font-size: 13px; background: #fff; border-left: 1px solid #aaa; box-sizing: border-box; }
      hr { border: 0; border-top: 1px solid #bbb; margin: 3.5px 2px; }
      .wrap { margin-top: -1px; }
    </style><div class="wrap">${top}<hr>${mid}<hr>${low}${nums}${cal}</div>`;
  }
}

class TdxTaskbar extends BaseEl {
  render() {
    const pin = `<svg width="24" height="28" viewBox="0 0 24 28"><rect x="2" y="2" width="20" height="24" fill="#e8dcb0"/><path d="M2 2 H12 L2 14 Z" fill="#7cc0a0"/><path d="M22 26 H12 L22 12 Z" fill="#f0c060"/><path d="M4 2 L18 24" stroke="#c84060" stroke-width="2"/><circle cx="11" cy="12" r="3.5" fill="#d83030"/><path d="M14 14 V26 L17 23 L20 27 L21 26 L19 22 L22 22 Z" fill="#fff" stroke="#222" stroke-width=".7"/></svg>`;
    this.shadowRoot.innerHTML = `<style>
      :host { display: flex; height: 43px; box-sizing: border-box; border-top: 3px solid #f0f0f0; background: linear-gradient(90deg, #1c2a32, #243239 50%, #1e2b33); color: #e8e8e8; align-items: center; font-size: 13px; }
      .st { width: 48px; height: 40px; display: flex; align-items: center; justify-content: center; background: #15232b; flex: none; }
      .sr { width: 343px; height: 40px; background: #f3f3f3; color: #333; display: flex; align-items: center; padding-left: 12px; gap: 12px; box-sizing: border-box; font-size: 14px; flex: none; }
      .c { width: 49.3px; height: 40px; display: flex; align-items: center; justify-content: center; flex: none; box-sizing: border-box; border-bottom: 3px solid transparent; padding-top: 3px; }
      .on { background: #3d4b53; border-bottom-color: #6fb4e6; }
      .u { border-bottom-color: #6fb4e6; }
      .tray { margin-left: auto; display: flex; align-items: center; height: 40px; padding-right: 7px; }
      .tray span { display: flex; justify-content: center; width: 24px; }
      .clock { width: 78px !important; display: block !important; text-align: center; line-height: 20px; font-size: 12.5px; margin-left: 3px; }
      svg { display: block; }
    </style>
    <div class="st"><svg width="17" height="17" viewBox="0 0 17 17" fill="#fff"><path d="M0 2.4 L7 1.4 V8 H0 Z M8 1.2 L17 0 V8 H8 Z M0 9 H7 V15.6 L0 14.6 Z M8 9 H17 V17 L8 15.8 Z"/></svg></div>
    <div class="sr"><svg width="16" height="20" viewBox="0 0 16 20" fill="none" stroke="#222" stroke-width="1.3"><circle cx="10" cy="7" r="5.3"/><path d="M6.5 11 L1 18"/></svg><span>在这里输入你要搜索的内容</span></div>
    <div class="c"><svg width="18" height="18"><circle cx="9" cy="9" r="7" fill="none" stroke="#fff" stroke-width="2.2"/></svg></div>
    <div class="c"><svg width="16" height="20" viewBox="0 0 16 20" fill="none" stroke="#fff"><path d="M1 5 H9 V15 H1 M11 2 H15 M11 18 H15 M11 6 H15 V14 H11"/></svg></div>
    <div class="c"><svg width="26" height="28" viewBox="0 0 26 28"><path d="M1 14 C1 5 8 1 14 1 C21 1 25 7 25 14 H9 C9 19 15 22 22 19 V25 C12 29 1 24 1 14 Z" fill="#1a90c8"/><path d="M25 14 C25 7 21 1 14 1 C8 1 4 5 3 9 C7 5 16 6 16 12 H25 Z" fill="#50c878"/></svg></div>
    <div class="c"><svg width="24" height="26" viewBox="0 0 24 26"><path d="M2 3 H10 L12 6 H22 V24 H2 Z" fill="#f4c840"/><rect x="2" y="14" width="20" height="10" fill="#f8d860"/><rect x="8" y="16" width="8" height="6" fill="#2a7cc0"/></svg></div>
    <div class="c on"><svg width="24" height="28" viewBox="0 0 24 28"><rect width="24" height="28" fill="#d8141c"/><path d="M19 4 L9 10 L4 14 L10 15 L7 23 L16 12 L12 11 Z" fill="#fff"/></svg></div>
    <div class="c">${pin}</div>
    <div class="c u"><svg width="26" height="26" viewBox="0 0 26 26"><rect x="2" y="1" width="22" height="24" rx="3" fill="#2a3a48"/><rect x="6" y="8" width="9" height="10" rx="2" fill="none" stroke="#fff" stroke-width="1.4"/><path d="M16 11 L20 9 V17 L16 15" fill="none" stroke="#fff" stroke-width="1.4"/></svg></div>
    <div class="c u">${pin}</div>
    <div class="tray">
      <span><svg width="12" height="8" viewBox="0 0 12 8" fill="none" stroke="#ddd" stroke-width="1.3"><path d="M1 7 L6 1 L11 7"/></svg></span>
      <span><svg width="12" height="22" viewBox="0 0 12 22" fill="none" stroke="#ddd"><rect x="3.5" y="1" width="5" height="11" rx="2.5" fill="#ddd"/><path d="M1 8 C1 17 11 17 11 8 M6 15 V20 M2 21 H10"/></svg></span>
      <span><svg width="16" height="18" viewBox="0 0 16 18" fill="none" stroke="#ddd"><rect x="1" y="1" width="14" height="11"/><path d="M8 12 V16 M3 17 H13"/></svg></span>
      <span><svg width="18" height="16" viewBox="0 0 18 16" fill="none" stroke="#ddd"><path d="M1 6 H4 L8 2 V14 L4 10 H1 Z M11 5 C12.5 7 12.5 9 11 11 M13.5 3 C16 6 16 10 13.5 13"/></svg></span>
      <span style="font-size:14px">中</span>
      <span style="margin-left:4px"><svg width="16" height="22" viewBox="0 0 16 22"><path d="M2 3 L14 1 V19 L2 21 Z" fill="#22c058"/><text x="8" y="16" text-anchor="middle" font-size="13" font-weight="bold" fill="#fff" font-family="Liberation Sans">S</text></svg></span>
      <span class="clock">15:03<br>2021/9/4</span>
      <span style="width:44px"><svg width="24" height="32" viewBox="0 0 24 32"><path d="M2 2 H18 V18 H9 L6 22 V18 H2 Z" fill="#eee"/><path d="M5 7 H15 M5 11 H15" stroke="#333"/><circle cx="15" cy="22" r="8" fill="#2a3840" stroke="#ccc"/><text x="15" y="27" text-anchor="middle" font-size="12" fill="#eee" font-family="Liberation Sans">4</text></svg></span>
    </div>`;
  }
}

class TdxPopup extends BaseEl {
  render() {
    this.shadowRoot.innerHTML = `<style>
      :host { position: absolute; left: 1827px; top: 347px; width: 52px; display: block; font-size: 12px; }
      .t { height: 25px; background: #fbfbfb; color: #b8b8b8; line-height: 25px; padding-left: 3px; box-sizing: border-box; position: relative; font-size: 11.5px; }
      .t i { position: absolute; right: 1px; top: 1px; width: 20px; height: 23px; background: #eeeeee; }
      .b { height: 22px; background: #f0f0f0; color: #111; text-align: center; line-height: 20px; box-sizing: border-box; border: 1px solid #fff; border-right: 2px solid #555; border-bottom: 2px solid #555; }
    </style><div class="t">Poi...<i></i></div><div class="b">开始</div>`;
  }
}

class TdxIme extends BaseEl {
  render() {
    this.shadowRoot.innerHTML = `<style>
      :host { position: absolute; left: 1755px; top: 1011px; width: 165px; height: 26px; display: block; }
      .bar { position: absolute; left: 10px; right: 0; top: 4px; height: 18px; background: #f4f4f4; display: flex; align-items: center; padding-left: 20px; box-sizing: border-box; color: #222; font-size: 14px; }
      .bar span { width: 23.5px; display: flex; justify-content: center; }
      .s { position: absolute; left: 0; top: 0; }
    </style>
    <div class="bar">
      <span>五</span>
      <span><svg width="12" height="14" viewBox="0 0 12 14"><path d="M7 1 C7 6 4 9 1 10 C4 14 11 13 11 7 C11 4 9 2 7 1 Z" fill="#222"/></svg></span>
      <span style="font-size:12px;line-height:10px">°,</span>
      <span><svg width="14" height="12"><rect x=".5" y=".5" width="13" height="11" fill="none" stroke="#222"/><path d="M2 3.5 H12 M2 6 H12 M3 8.5 H11" stroke="#222" stroke-dasharray="1.5 1" /></svg></span>
      <span><svg width="12" height="14" viewBox="0 0 12 14" fill="#333"><circle cx="6" cy="3.5" r="3"/><path d="M1 14 C1 8 11 8 11 14 Z"/></svg></span>
      <span><svg width="13" height="13" viewBox="0 0 13 13" fill="#333"><circle cx="3" cy="3" r="2.8"/><circle cx="10" cy="3" r="2.8"/><circle cx="3" cy="10" r="2.8"/><circle cx="10" cy="10" r="2.8"/></svg></span>
    </div>
    <svg class="s" width="28" height="28" viewBox="0 0 28 28"><path d="M3 4 L25 0 V24 L3 28 Z" fill="#2ec44a"/><text x="14" y="22" text-anchor="middle" font-size="23" font-weight="bold" fill="#fff" font-family="Liberation Sans">S</text></svg>`;
  }
}

class TdxCursor extends BaseEl {
  render() {
    this.shadowRoot.innerHTML = `<style>:host { position: absolute; left: 1398px; top: 242px; display: block; width: 14px; height: 20px; } svg { display: block; }</style>
    <svg width="14" height="20" viewBox="0 0 14 20"><path d="M1 1 V15 L4.5 12 L7 18 L9.5 17 L7 11 H11.5 Z" fill="#fff" stroke="#000" stroke-width=".8"/></svg>`;
  }
}

[['tdx-titlebar', TdxTitlebar], ['tdx-list-row', TdxListRow], ['tdx-list', TdxList], ['tdx-toolbar', TdxToolbar],
 ['tdx-kline', TdxKline], ['tdx-volume', TdxVolume], ['tdx-macd', TdxMacd], ['tdx-dates', TdxDates],
 ['tdx-indicators', TdxIndicators], ['tdx-bottom', TdxBottom], ['tdx-stat', TdxStat], ['tdx-tick', TdxTick],
 ['tdx-quote', TdxQuote], ['tdx-iconbar', TdxIconbar], ['tdx-taskbar', TdxTaskbar], ['tdx-popup', TdxPopup],
 ['tdx-ime', TdxIme], ['tdx-cursor', TdxCursor]].forEach(([n, c]) => customElements.define(n, c));

// Fill the light DOM that the slots show
const list = document.getElementById('list');
ROWS.forEach(r => {
  const el = document.createElement('tdx-list-row');
  ['name', 'code', 'price', 'change', 'pct'].forEach((k, i) => el.setAttribute(k, r[i]));
  if (r[1] === '880380') el.setAttribute('selected', '');
  list.appendChild(el);
});

const quote = document.getElementById('quote');
const YEL = '#b8b840', PK = '#e02c3a', GRN = '#1cc01c', WH = '#ececec';
const stat = (slot, label, value, unit, color) => {
  const el = document.createElement('tdx-stat');
  el.slot = slot;
  el.setAttribute('label', label);
  el.setAttribute('value', value);
  el.setAttribute('unit', unit || '');
  el.setAttribute('color', color || YEL);
  quote.appendChild(el);
};
stat('a', 'A股成交', '15725.83', '亿');
stat('a', 'B股成交', '3.50', '亿');
stat('a', '国债成交', '14926.50', '亿');
stat('a', '基金成交', '902.60', '亿');
stat('a', '权证成交', '');
stat('b', '最新指数', '7176.07', '', PK);
stat('b', '今日开盘', '7011.16', '', GRN);
stat('b', '昨日收盘', '7061.13', '', WH);
stat('b', '指数涨跌', '114.94', '', PK);
stat('b', '指数涨幅', '1.63%', '', PK);
stat('b', '平均涨幅', '1.24%', '', PK);
stat('b', '指数振幅', '323.26/4.58%', '', '#c4c4c4');
stat('b', '总成交额', '384.66', '亿');
stat('b', '总成交量', '556.5', '万');
stat('b', '最高指数', '7207.56', '', PK);
stat('b', '最低指数', '6884.30', '', GRN);
stat('b', '指数量比', '1.29', '', PK);
TICKS.forEach(t => {
  const el = document.createElement('tdx-tick');
  el.slot = 't';
  el.setAttribute('time', t[0]);
  el.setAttribute('price', t[1]);
  el.setAttribute('vol', t[2]);
  el.setAttribute('unit', t[3]);
  quote.appendChild(el);
});
</script>
</body>
</html>
